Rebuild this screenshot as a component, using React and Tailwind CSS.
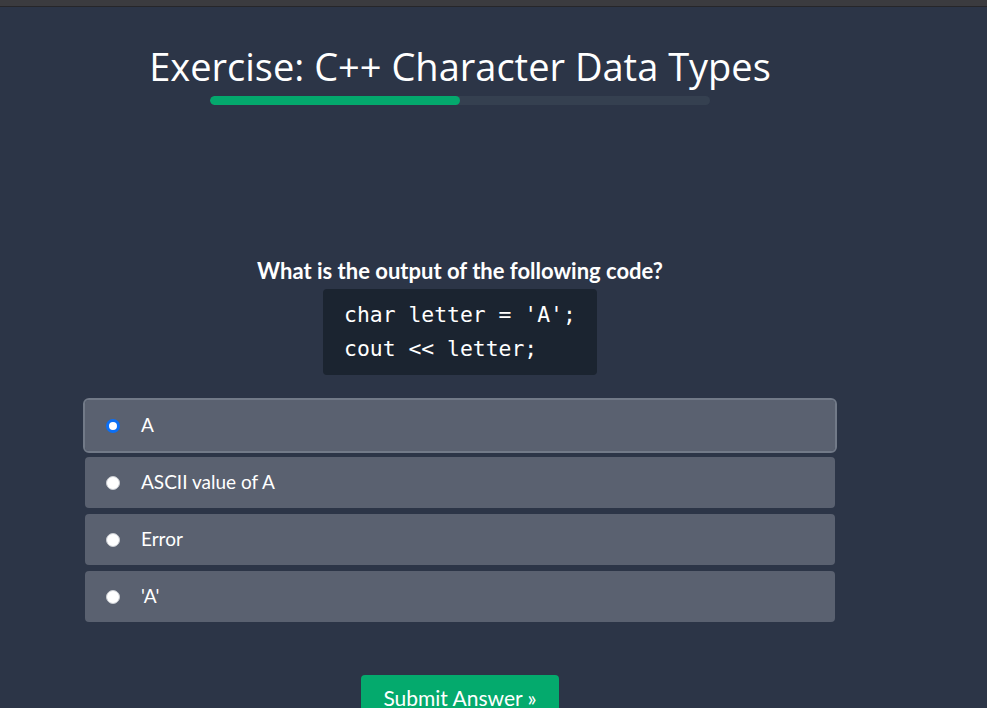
import React from 'react';

const options = ['A', 'ASCII value of A', 'Error', "'A'"];

const App = () => {
  const selected = 0;
  return (
    <div className="min-h-[708px] bg-[#2c3547] text-white" style={{ fontFamily: '"Noto Sans", sans-serif' }}>
      <div className="h-[7px] bg-[#3b3b3f] border-b border-[#26262a]" />
      <div className="w-[920px] flex flex-col items-center">
        <h1 className="mt-[34px] text-[38px] leading-[50px] font-normal" style={{ fontFamily: '"Open Sans", sans-serif' }}>
          Exercise: C++ Character Data Types
        </h1>
        <div className="mt-[5px] w-[500px] h-[9px] rounded-full bg-[#354050] overflow-hidden">
          <div className="h-full w-1/2 rounded-full bg-[#04a86d]" />
        </div>

        <p className="mt-[151px] text-[22px] leading-[29px] font-bold" style={{ fontFamily: 'Lato, sans-serif' }}>
          What is the output of the following code?
        </p>
        <div className="mt-[4px] w-[274px] h-[86px] rounded bg-[#1b2430] pl-[21px] py-[9px] text-[21.4px] leading-[34px] whitespace-pre" style={{ fontFamily: '"DejaVu Sans Mono", monospace' }}>
          <div>char letter = 'A';</div>
          <div>cout &lt;&lt; letter;</div>
        </div>

        <div className="mt-[25px] w-[750px] flex flex-col gap-[6px]">
          {options.map((opt, i) => (
            <label
              key={i}
              className={`h-[51px] flex items-center rounded bg-[#5a6170] pl-[21px] ${i === selected ? 'outline-2 outline-[#727a88]' : ''}`}
            >
              <span
                className={`w-[14px] h-[14px] rounded-full bg-white ${i === selected ? 'border-[3px] border-[#0b6ff5]' : 'border border-[#c9ccd1]'}`}
              />
              <span className="ml-[21px] text-[19px]" style={{ fontFamily: 'Lato, sans-serif' }}>{opt}</span>
            </label>
          ))}
        </div>

        <button className="mt-[53px] w-[198px] h-[44px] rounded bg-[#04aa6d] text-[21px] pt-[2px] text-white" style={{ fontFamily: 'Lato, sans-serif' }}>
          Submit Answer »
        </button>
      </div>
    </div>
  );
};

export default App;
